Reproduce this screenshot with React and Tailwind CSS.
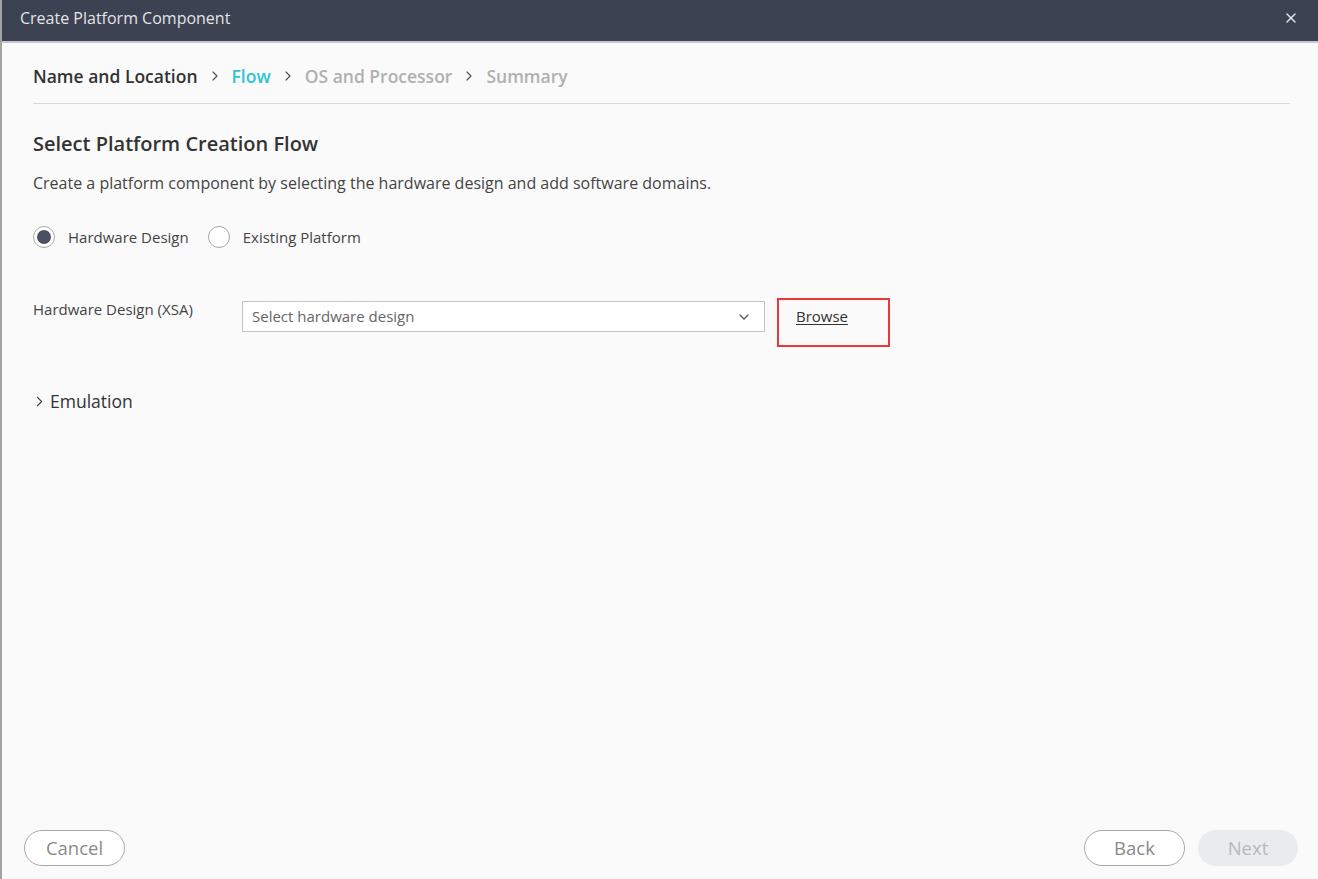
import { ChevronRight, ChevronDown, X } from 'lucide-react';

const font = { fontFamily: '"Open Sans", "Noto Sans", sans-serif' };

function Crumb({ label, state }) {
  const color =
    state === 'done' ? 'text-[#333] font-semibold' : state === 'active' ? 'text-[#2fc4d2] font-semibold' : 'text-[#b0b0b0] font-semibold';
  return <span className={`text-[17.5px] leading-6 ${color}`}>{label}</span>;
}

function Sep() {
  return <ChevronRight size={16} strokeWidth={1.8} className="text-[#555] mx-[9px]" />;
}

function Radio({ label, checked }) {
  return (
    <label className="flex items-center gap-[13px] cursor-pointer">
      <span className="w-[22px] h-[22px] rounded-full border-[1.5px] border-[#a8a8a8] bg-white flex items-center justify-center">
        {checked && <span className="w-[14px] h-[14px] rounded-full bg-[#4b5163]"></span>}
      </span>
      <span className="text-[15px] leading-6 text-[#444]">{label}</span>
    </label>
  );
}

export default function App() {
  return (
    <div style={font} className="w-full h-[879px] flex flex-col bg-[#fafafa] border-l-2 border-[#a3a3a3]">
      {/* Title bar */}
      <div className="h-[43px] shrink-0 bg-[#3c4252] border-b-2 border-[#c3c7d1] flex items-center justify-between pl-[18px] pr-[19px] pb-[5px]">
        <span className="text-[16px] text-[#e4e4e4]">Create Platform Component</span>
        <X size={16} strokeWidth={2} className="text-[#e8e8e8]" />
      </div>

      <div className="flex-1 flex flex-col pl-[31px] pr-[28px] pt-[21px]">
        {/* Steps */}
        <div className="flex items-center pb-[15px] border-b border-[#d6dae0]">
          <Crumb label="Name and Location" state="done" />
          <Sep />
          <Crumb label="Flow" state="active" />
          <Sep />
          <Crumb label="OS and Processor" />
          <Sep />
          <Crumb label="Summary" />
        </div>

        <h2 className="mt-[27px] text-[20px] leading-[26px] font-semibold text-[#333]">Select Platform Creation Flow</h2>
        <p className="mt-[15px] text-[16px] leading-[22px] text-[#444]">
          Create a platform component by selecting the hardware design and add software domains.
        </p>

        <div className="mt-[31px] flex items-center gap-[19px]">
          <Radio label="Hardware Design" checked />
          <Radio label="Existing Platform" />
        </div>

        <div className="mt-[49px] flex items-start">
          <label className="w-[209px] pt-[1px] text-[15px] leading-5 text-[#444]">Hardware Design (XSA)</label>
          <div className="mt-[3px] w-[523px] h-[31px] border border-[#c4c4c4] bg-white flex items-center justify-between pl-[9px] pr-[12px]">
            <span className="text-[15px] text-[#666]">Select hardware design</span>
            <ChevronDown size={16} strokeWidth={1.8} className="text-[#555]" />
          </div>
          <div className="ml-[12px] w-[113px] h-[49px] border-2 border-[#e8383b] pl-[17px] pt-[4px]">
            <span className="text-[15px] leading-5 text-[#333] underline underline-offset-2">Browse</span>
          </div>
        </div>

        <div className="mt-[42px] flex items-center gap-[2px] -ml-[2px]">
          <ChevronRight size={17} strokeWidth={1.5} className="text-[#444]" />
          <span className="text-[17.5px] leading-6 text-[#333]">Emulation</span>
        </div>

        <div className="mt-auto -ml-[9px] -mr-[8px] pb-[13px] flex items-center">
          <button className="w-[101px] h-[36px] rounded-full border-[1.5px] border-[#a9a9a9] text-[18.5px] text-[#8a8a8a] bg-white">
            Cancel
          </button>
          <div className="ml-auto flex items-center gap-[13px]">
            <button className="w-[101px] h-[36px] rounded-full border-[1.5px] border-[#a9a9a9] text-[18.5px] text-[#8a8a8a] bg-white">
              Back
            </button>
            <button className="w-[100px] h-[36px] rounded-full bg-[#e9ecef] text-[18.5px] text-[#b5b9be]">
              Next
            </button>
          </div>
        </div>
      </div>
    </div>
  );
}
